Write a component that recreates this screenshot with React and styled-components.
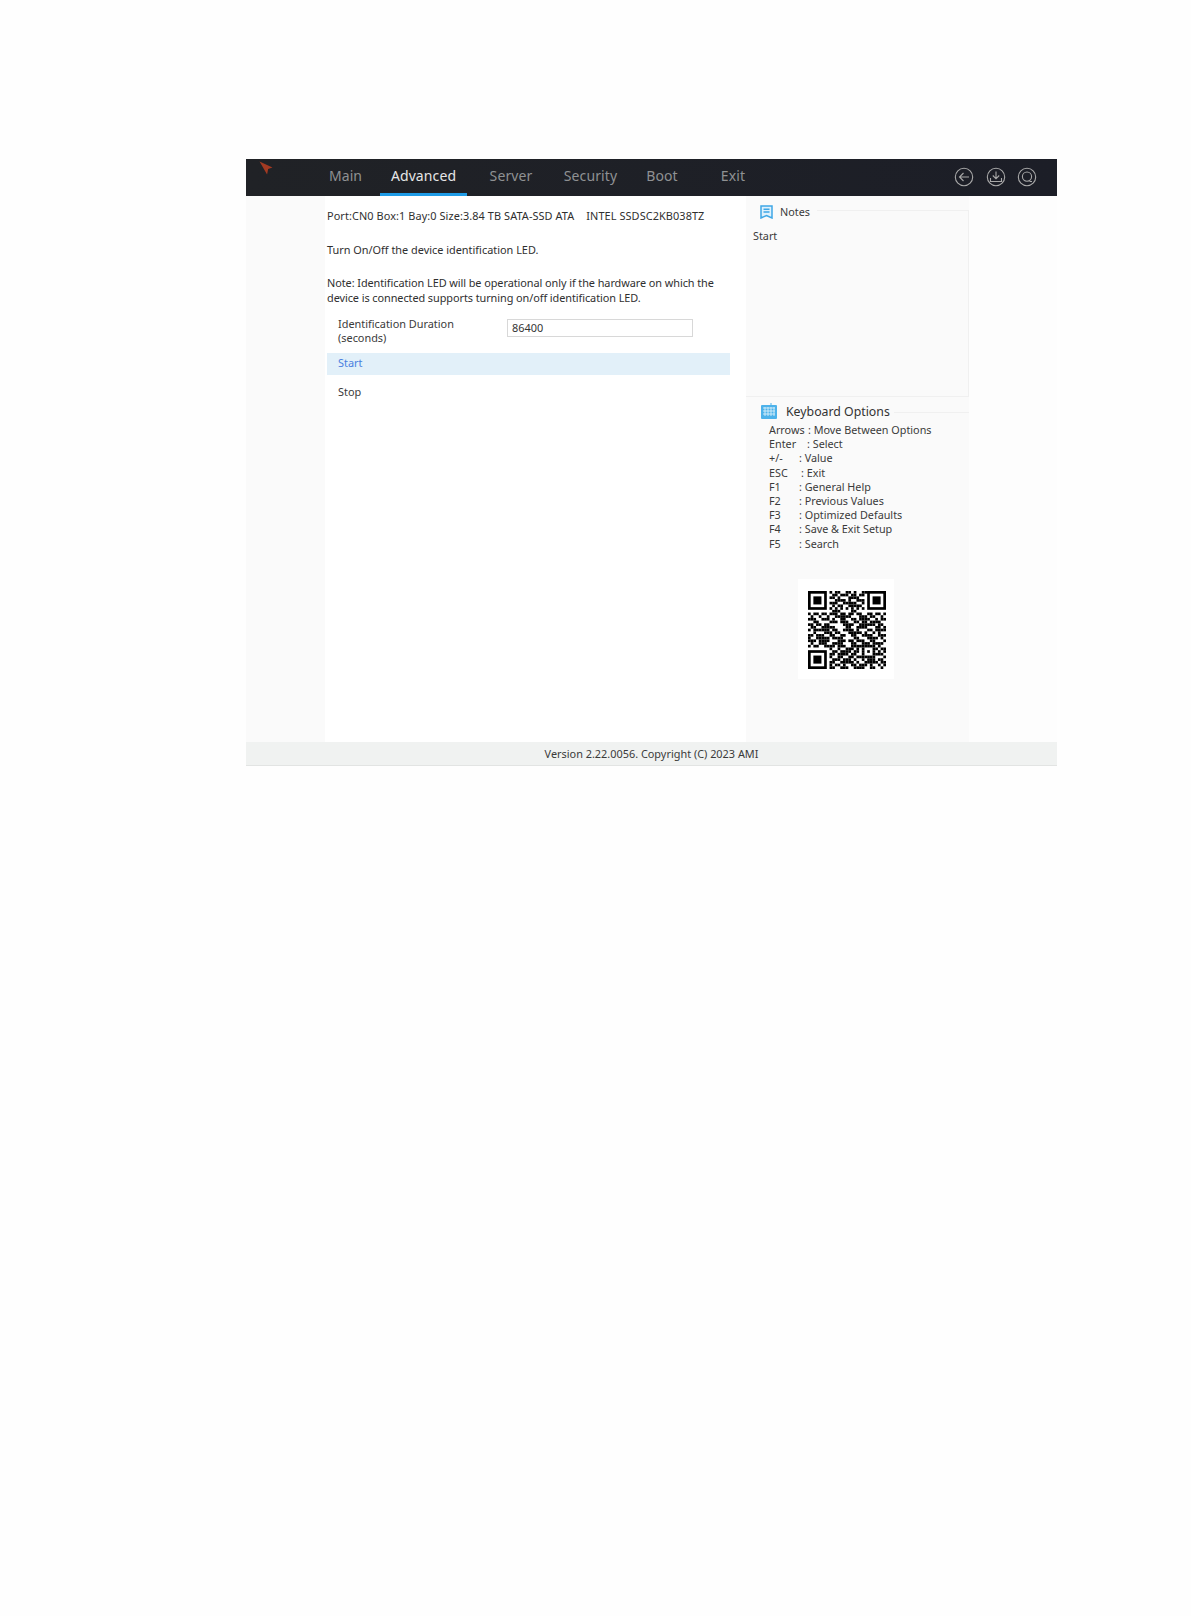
import styled, { createGlobalStyle } from "styled-components";

const GlobalStyle = createGlobalStyle`
  html, body {
    margin: 0;
    background: #fefefe;
  }
  body {
    font-family: "Noto Sans", "DejaVu Sans", sans-serif;
    color: #333;
  }
`;

const tabs = [
  { label: "Main", width: 69 },
  { label: "Advanced", width: 87, active: true },
  { label: "Server", width: 88 },
  { label: "Security", width: 71 },
  { label: "Boot", width: 72 },
  { label: "Exit", width: 70 },
];

const keys = [
  { key: "Arrows", width: 39, text: "Move Between Options" },
  { key: "Enter", width: 38, text: "Select" },
  { key: "+/-", width: 30, text: "Value" },
  { key: "ESC", width: 32, text: "Exit" },
  { key: "F1", width: 30, text: "General Help" },
  { key: "F2", width: 30, text: "Previous Values" },
  { key: "F3", width: 30, text: "Optimized Defaults" },
  { key: "F4", width: 30, text: "Save & Exit Setup" },
  { key: "F5", width: 30, text: "Search" },
];

// finder corners are stamped on top in QrCode
const qrRows = [
  "00000000101100110100111000000",
  "00000000011011101101100000000",
  "00000000110100011110000000000",
  "00000000001111010011100000000",
  "00000000111001111100100000000",
  "00000000010110011111000000000",
  "00000000101010101010100000000",
  "00000000011100001100000000000",
  "10110110111011011011001101101",
  "01001001001111110001110110010",
  "11100111010011001101111001011",
  "00110000111011100110110111100",
  "11011011000001111001111110110",
  "01100111110000110011110001101",
  "10111111011001111010001101111",
  "00100011101100011111010010100",
  "11011100110011001100111100111",
  "10011111011110000110001111010",
  "11101111000111011011100110001",
  "01001110011110001100111011110",
  "10110011110111001111111110100",
  "00000000100100111010100011011",
  "00000000011011110110101010101",
  "00000000110111101100100011110",
  "00000000100110011011111110001",
  "00000000011101110100101110110",
  "00000000110011111010011111011",
  "00000000101101001101110100101",
  "00000000110011100111100110010",
];

const QrCode = () => {
  const finders = [
    [0, 0],
    [22, 0],
    [0, 22],
  ];
  return (
    <svg width="78" height="78" viewBox="0 0 29 29">
      {qrRows.map((row, y) =>
        row
          .split("")
          .map((cell, x) =>
            cell === "1" ? <rect key={`${x}-${y}`} x={x} y={y} width="1" height="1" fill="#000" /> : null
          )
      )}
      {finders.map(([x, y]) => (
        <g key={`${x}-${y}`}>
          <rect x={x + 0.5} y={y + 0.5} width="6" height="6" fill="#fff" stroke="#000" strokeWidth="1" />
          <rect x={x + 2} y={y + 2} width="3" height="3" fill="#000" />
        </g>
      ))}
    </svg>
  );
};

const App = () => {
  return (
    <>
      <GlobalStyle />
      <Page>
        <Screen>
          <Header>
            <Logo>
              <svg width="14" height="14" viewBox="0 0 13 13">
                <path d="M0.5 0.5 L12.5 6 L8.5 7.5 L7.5 12.5 Z" fill="#a33a22" />
              </svg>
            </Logo>
            <TabList>
              {tabs.map((tab) => (
                <Tab key={tab.label} $width={tab.width} $active={tab.active}>
                  {tab.label}
                </Tab>
              ))}
            </TabList>
            <HeaderIcons>
              <svg width="20" height="20" viewBox="0 0 20 20" fill="none" stroke="#a8a8a8" strokeWidth="1.1">
                <circle cx="10" cy="10" r="8.7" />
                <path d="M15 10H5.5M9.5 6L5.5 10L9.5 14" />
              </svg>
              <svg width="20" height="20" viewBox="0 0 20 20" fill="none" stroke="#a8a8a8" strokeWidth="1.1">
                <circle cx="10" cy="10" r="8.7" />
                <path d="M10 4.5V11.5M6.8 8.5L10 11.8L13.2 8.5M4.5 11V14.5H15.5V11" />
              </svg>
              <svg width="20" height="20" viewBox="0 0 20 20" fill="none" stroke="#a8a8a8" strokeWidth="1.1">
                <circle cx="10" cy="10" r="8.7" />
                <circle cx="10" cy="9.6" r="4.6" />
                <path d="M12.5 14.5H15" />
              </svg>
            </HeaderIcons>
          </Header>

          <Body>
            <LeftGutter />
            <Content>
              <PortPara>
                Port:CN0 Box:1 Bay:0 Size:3.84 TB SATA-SSD ATA<PortGap />INTEL SSDSC2KB038TZ
              </PortPara>
              <Para>Turn On/Off the device identification LED.</Para>
              <NotePara>
                Note: Identification LED will be operational only if the hardware on which the
                <br />
                device is connected supports turning on/off identification LED.
              </NotePara>
              <FieldRow>
                <FieldLabel>
                  Identification Duration
                  <br />
                  (seconds)
                </FieldLabel>
                <FieldInput>86400</FieldInput>
              </FieldRow>
              <Action $selected>Start</Action>
              <Action>Stop</Action>
            </Content>

            <SidePanel>
              <NotesBox>
                <NotesHead>
                  <svg width="13" height="14" viewBox="0 0 13 14" fill="none" stroke="#3fa7e6" strokeWidth="1.5">
                    <path d="M1 1H12V13L6.5 10.5L1 13Z" fill="#dff1fc" />
                    <path d="M3.5 4.2H9.5M3.5 7H9.5" />
                  </svg>
                  <NotesTitle>Notes</NotesTitle>
                </NotesHead>
                <NotesText>Start</NotesText>
              </NotesBox>

              <KeyHead>
                <svg width="16" height="16" viewBox="0 0 16 16">
                  <rect x="0" y="2" width="16" height="14" rx="1" fill="#4db2ea" />
                  <path d="M10 2V0" stroke="#4db2ea" strokeWidth="1" />
                  <path
                    d="M2 5H14M2 8H14M2 11H14M4 4V13M7 4V13M10 4V13M13 4V13"
                    stroke="#d8effb"
                    strokeWidth="0.9"
                    fill="none"
                  />
                </svg>
                <KeyTitle>Keyboard Options</KeyTitle>
              </KeyHead>
              <KeyList>
                {keys.map((item) => (
                  <KeyRow key={item.key}>
                    <KeyName $width={item.width}>{item.key}</KeyName>
                    <span>: {item.text}</span>
                  </KeyRow>
                ))}
              </KeyList>

              <QrWrap>
                <QrCode />
              </QrWrap>
            </SidePanel>
            <RightGutter />
          </Body>

          <Footer>Version 2.22.0056. Copyright (C) 2023 AMI</Footer>
        </Screen>
      </Page>
    </>
  );
};

export default App;

const Page = styled.div`
  width: 1191px;
  height: 1616px;
  padding: 159px 0 0 246px;
  box-sizing: border-box;
`;

const Screen = styled.div`
  width: 811px;
  display: flex;
  flex-direction: column;
`;

const Header = styled.header`
  height: 37px;
  display: flex;
  align-items: stretch;
  background: linear-gradient(90deg, #202226, #1c1e27);
`;

const Logo = styled.div`
  width: 65px;
  padding: 2px 0 0 13px;
  box-sizing: border-box;
  svg {
    display: block;
  }
`;

const TabList = styled.nav`
  display: flex;
`;

const Tab = styled.div`
  width: ${(p) => p.$width}px;
  box-sizing: border-box;
  display: flex;
  align-items: center;
  justify-content: center;
  font-size: 14px;
  letter-spacing: 0.1px;
  color: ${(p) => (p.$active ? "#e6e6e6" : "#8f9193")};
  border-bottom: 3px solid ${(p) => (p.$active ? "#1e9be6" : "transparent")};
  padding-bottom: 1px;
`;

const HeaderIcons = styled.div`
  margin-left: auto;
  display: flex;
  align-items: center;
  gap: 11.5px;
  padding: 0 20px 2px 0;
`;

const Body = styled.div`
  height: 546px;
  display: flex;
`;

const LeftGutter = styled.div`
  width: 79px;
  background: #fafafa;
`;

const Content = styled.main`
  width: 421px;
  box-sizing: border-box;
  padding: 12px 16px 0 2px;
  background: #fff;
  font-size: 10.9px;
  line-height: 15px;
`;

const Para = styled.p`
  margin: 0 0 18.5px;
  white-space: nowrap;
  color: #2f2f2f;
`;

const PortPara = styled(Para)`
  letter-spacing: 0.09px;
`;

const PortGap = styled.span`
  display: inline-block;
  width: 12px;
`;

const NotePara = styled(Para)`
  letter-spacing: -0.07px;
`;

const FieldRow = styled.div`
  display: flex;
  align-items: center;
  height: 30px;
  margin-top: -7px;
  padding-left: 11px;
`;

const FieldLabel = styled.div`
  width: 169px;
  color: #3a3a3a;
  line-height: 14px;
  margin-bottom: 1px;
`;

const FieldInput = styled.div`
  width: 186px;
  height: 18px;
  box-sizing: border-box;
  border: 1px solid #d8d8d8;
  background: #fff;
  padding-left: 4px;
  line-height: 16px;
  margin-bottom: 7px;
`;

const Action = styled.div`
  height: ${(p) => (p.$selected ? "22px" : "21px")};
  line-height: 20px;
  padding-left: 11px;
  margin-top: ${(p) => (p.$selected ? "6px" : "7px")};
  color: ${(p) => (p.$selected ? "#4a7fe0" : "#3a3a3a")};
  background: ${(p) => (p.$selected ? "#e2f0f9" : "transparent")};
`;

const SidePanel = styled.aside`
  width: 223px;
  background: #fafafa;
  font-size: 10.8px;
  color: #3a3a3a;
  display: flow-root;
`;

const NotesBox = styled.section`
  display: flow-root;
  height: 187px;
  box-sizing: border-box;
  margin-top: 14px;
  border-right: 1px solid #f0f0f0;
  border-bottom: 1px solid #f0f0f0;
`;

const NotesHead = styled.div`
  display: flex;
  align-items: center;
  margin-top: -5px;
  padding-left: 14px;
  height: 14px;
  gap: 7px;
  &::after {
    content: "";
    flex: 1;
    height: 1px;
    background: #f0f0f0;
    margin-top: -4px;
  }
`;

const NotesTitle = styled.span`
  line-height: 14px;
`;

const NotesText = styled.div`
  margin-top: 9px;
  padding-left: 7px;
`;

const KeyHead = styled.div`
  display: flex;
  align-items: center;
  height: 16px;
  margin-top: 6px;
  padding-left: 15px;
  gap: 9px;
  &::after {
    content: "";
    flex: 1;
    height: 1px;
    background: #f0f0f0;
    margin-left: -5px;
    margin-top: 2px;
  }
`;

const KeyTitle = styled.span`
  font-size: 12.3px;
  color: #333;
`;

const KeyList = styled.div`
  margin-top: 4px;
  padding-left: 23px;
  line-height: 14.2px;
`;

const KeyRow = styled.div`
  display: flex;
  white-space: nowrap;
`;

const KeyName = styled.span`
  width: ${(p) => p.$width}px;
  flex: none;
`;

const QrWrap = styled.div`
  width: 96px;
  height: 100px;
  box-sizing: border-box;
  margin: 28px 0 0 52px;
  padding: 12px 0 0 10px;
  background: #fff;
  svg {
    display: block;
  }
`;

const RightGutter = styled.div`
  flex: 1;
  background: #fdfdfd;
`;

const Footer = styled.footer`
  height: 24px;
  display: flex;
  align-items: center;
  justify-content: center;
  box-sizing: border-box;
  background: #f0f2f1;
  border-bottom: 1px solid #e2e4e3;
  font-size: 10.9px;
  color: #3a3a3a;
`;
